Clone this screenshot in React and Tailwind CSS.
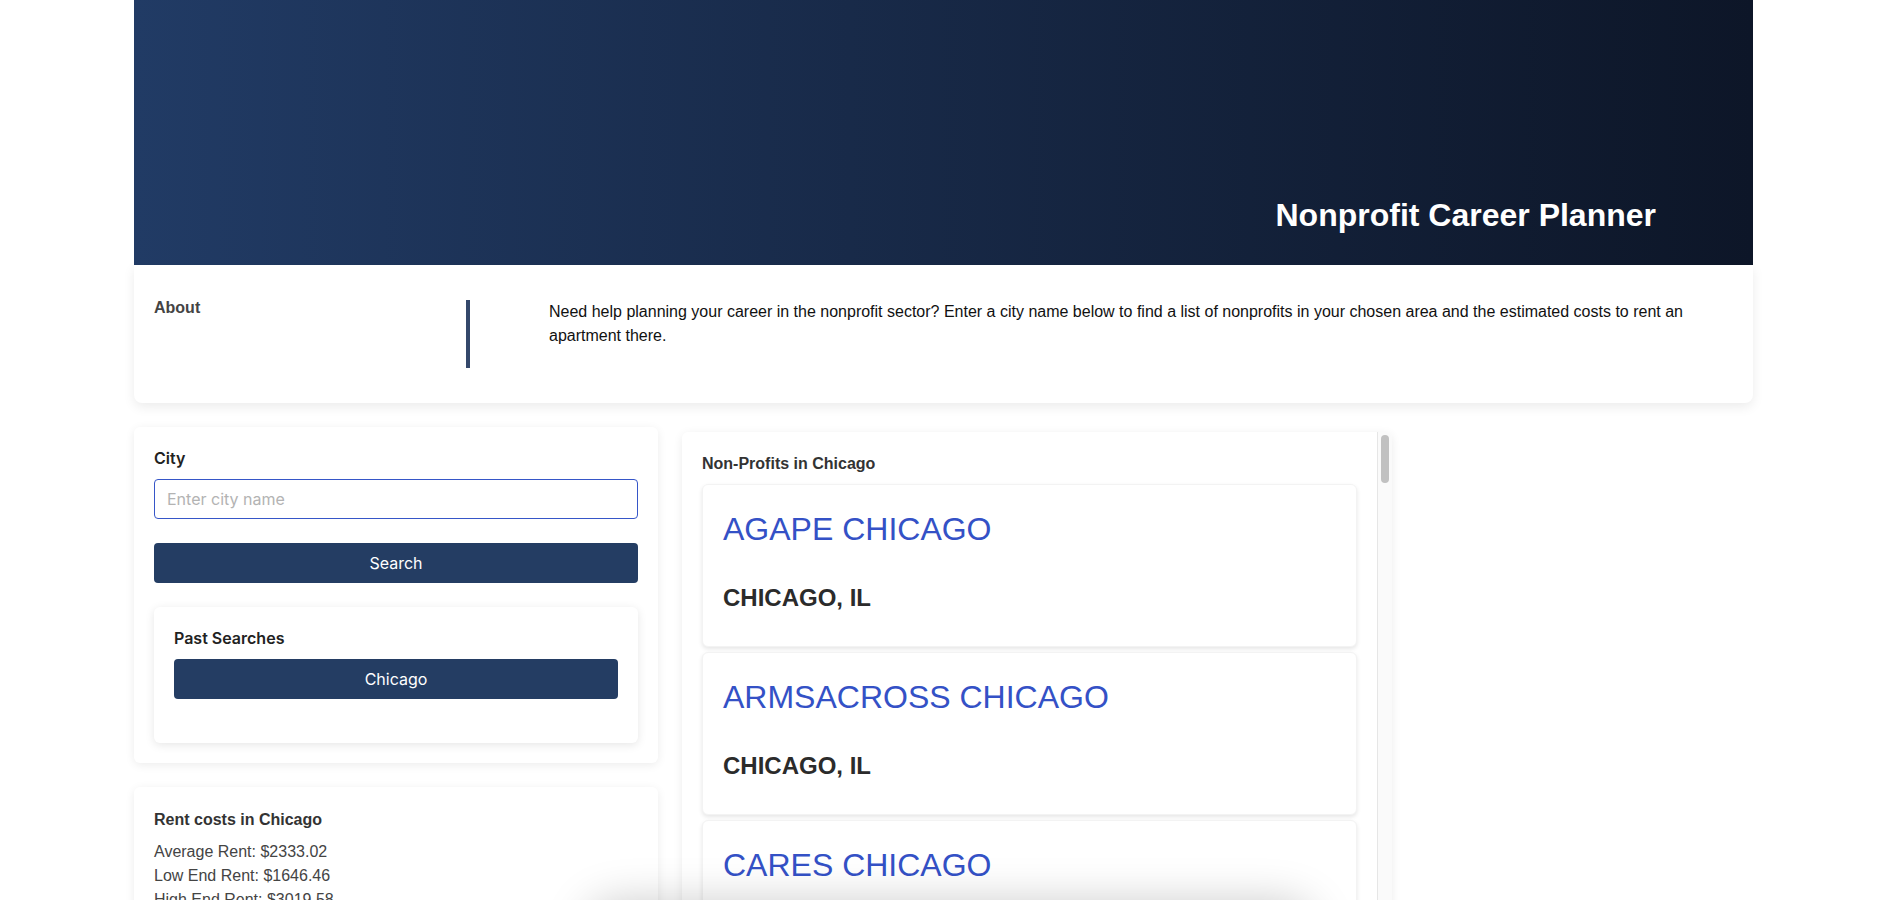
import React, { useState } from "react";

const nonprofits = [
  "AGAPE CHICAGO",
  "ARMSACROSS CHICAGO",
  "CARES CHICAGO",
  "CHICAGO ACADEMY OF SCIENCES",
  "CHICAGO ARCHITECTURE CENTER",
  "CHICAGO BOTANIC GARDEN",
  "CHICAGO CARES",
  "CHICAGO CHILDRENS CHOIR",
  "CHICAGO COMMUNITY TRUST",
  "CHICAGO FOOD DEPOSITORY",
  "CHICAGO HOUSE",
  "CHICAGO JAZZ PHILHARMONIC",
  "CHICAGO LIGHTS",
  "CHICAGO PUBLIC LIBRARY FOUNDATION",
  "CHICAGO SHAKESPEARE THEATER",
  "CHICAGO URBAN LEAGUE",
  "CHICAGO YOUTH CENTERS",
  "CROSSROADS CHICAGO",
  "DEBORAHS PLACE",
  "GREATER CHICAGO FOOD DEPOSITORY",
  "HABITAT FOR HUMANITY CHICAGO",
  "HOWARD BROWN HEALTH",
  "INSPIRATION CORPORATION",
  "LA CASA NORTE",
  "LINCOLN PARK ZOO",
  "MERCY HOME FOR BOYS AND GIRLS",
  "METROPOLITAN FAMILY SERVICES",
  "NORTHWESTERN SETTLEMENT",
  "OPENLANDS CHICAGO",
  "PACIFIC GARDEN MISSION",
  "PAWS CHICAGO",
  "PRIMO CENTER",
  "SARAHS CIRCLE",
  "THRESHOLDS CHICAGO",
  "UNITED WAY OF METRO CHICAGO",
  "YWCA METROPOLITAN CHICAGO",
];

const rent = { average: "2333.02", low: "1646.46", high: "3019.58" };

export default function App() {
  const [city, setCity] = useState("");
  const [searched] = useState("Chicago");

  return (
    <div className="min-h-screen bg-white font-['Liberation_Sans',Arial,sans-serif] text-[#222]">
      <div className="w-[1619px] mx-auto">
        {/* header */}
        <header className="h-[265px] bg-linear-to-r from-[#213b65] to-[#0d1628] flex items-end justify-end pr-[97px] pb-[34px]">
          <h1 className="text-[32px] leading-none font-bold text-white">Nonprofit Career Planner</h1>
        </header>

        {/* about */}
        <section className="bg-white rounded-b-lg shadow-[0_4px_12px_rgba(0,0,0,0.08)] px-5 pr-10 py-[35px] flex items-start">
          <h3 className="w-[312px] shrink-0 -mt-1 text-base leading-6 font-bold text-[#444]">About</h3>
          <div className="w-1 h-[68px] shrink-0 bg-[#34486b]" />
          <p className="ml-[79px] text-base leading-6 text-[#111]">
            Need help planning your career in the nonprofit sector? Enter a city name below to find a list of nonprofits
            in your chosen area and the estimated costs to rent an apartment there.
          </p>
        </section>

        <div className="flex items-start gap-6 mt-6">
          {/* left column */}
          <div className="w-[524px] shrink-0 flex flex-col gap-6">
            <div className="bg-white rounded-md shadow-[0_2px_10px_rgba(0,0,0,0.08)] px-5 pt-[19px] pb-5 font-['Inter',sans-serif]">
              <label className="block text-base leading-6 font-semibold text-[#222]">City</label>
              <input
                value={city}
                onChange={(e) => setCity(e.target.value)}
                placeholder="Enter city name"
                className="mt-[9px] w-full h-10 px-3 rounded border border-[#3656c8] text-base text-[#222] placeholder:text-[#b3b3b3] outline-none"
              />
              <button className="mt-6 w-full h-10 rounded bg-[#243d63] text-white text-base">Search</button>

              <div className="mt-6 bg-white rounded-md shadow-[0_2px_10px_rgba(0,0,0,0.1)] px-5 pt-[19px] pb-11">
                <h4 className="text-base leading-6 font-semibold text-[#222]">Past Searches</h4>
                <button className="mt-[9px] w-full h-10 rounded bg-[#243d63] text-white text-base">{searched}</button>
              </div>
            </div>

            <div className="bg-white rounded-md shadow-[0_2px_10px_rgba(0,0,0,0.08)] px-5 pt-[21px]">
              <h4 className="text-base leading-6 font-bold text-[#333]">Rent costs in {searched}</h4>
              <div className="mt-2 pb-5 text-base leading-6 text-[#444]">
                <p>Average Rent: ${rent.average}</p>
                <p>Low End Rent: ${rent.low}</p>
                <p>High End Rent: ${rent.high}</p>
              </div>
            </div>
          </div>

          {/* nonprofits list */}
          <div className="mt-[5px] w-[710px] h-[640px] flex bg-white rounded-md shadow-[0_2px_10px_rgba(0,0,0,0.08)] overflow-hidden">
            <div className="flex-1 overflow-y-auto [scrollbar-width:none] px-5 pt-5">
              <h4 className="text-base leading-6 font-bold text-[#333] mb-2">Non-Profits in {searched}</h4>
              <div className="flex flex-col gap-[5px] pb-5">
                {nonprofits.map((name) => (
                  <div
                    key={name}
                    className="bg-white rounded-md shadow-[0_2px_4px_rgba(0,0,0,0.1)] border border-[#f3f3f3] px-5 pt-7 pb-[36px]"
                  >
                    <h2 className="text-[32px] leading-none font-normal text-[#3451c6]">{name}</h2>
                    <h3 className="mt-[41px] text-2xl leading-none font-bold text-[#2b2b2b]">CHICAGO, IL</h3>
                  </div>
                ))}
              </div>
            </div>
            {/* scroll track */}
            <div className="w-[15px] shrink-0 bg-[#fafafa] border-l border-[#e6e6e6] pt-[3px] pl-[3px]">
              <div className="w-2 h-12 rounded-full bg-[#c1c1c1]" />
            </div>
          </div>
        </div>
      </div>

      {/* floating panel just below the fold */}
      <div className="fixed left-[600px] top-[915px] w-[700px] h-[60px] rounded-2xl bg-white shadow-[0_0_45px_12px_rgba(0,0,0,0.22)]" />
    </div>
  );
}
